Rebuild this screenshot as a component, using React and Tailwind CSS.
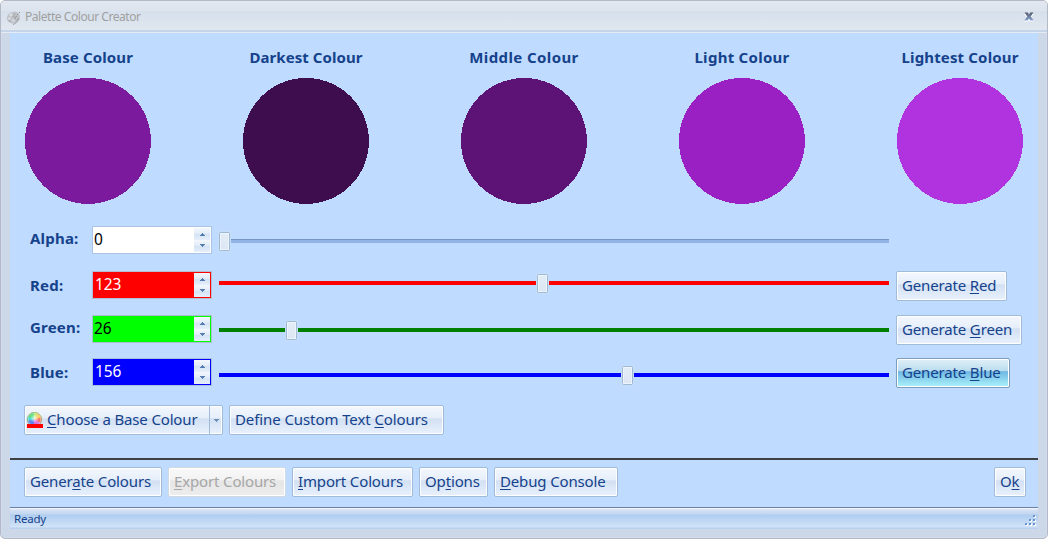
import React from "react";

const swatches = [
  { name: "Base Colour", fill: "fill-[#7b1a9c]", label: "tracking-[0.12px]" },
  { name: "Darkest Colour", fill: "fill-[#3d0d4e]", label: "tracking-[0.06px]" },
  { name: "Middle Colour", fill: "fill-[#5c1375]", label: "tracking-[0.4px]" },
  { name: "Light Colour", fill: "fill-[#9a20c3]", label: "tracking-[0.27px]" },
  { name: "Lightest Colour", fill: "fill-[#b033df]", label: "tracking-[0.15px]" },
];

const channels = [
  {
    name: "Alpha", value: 0, row: "h-[45px]", label: "mt-[1px]", field: "bg-white text-black border-[#a9c4e6]",
    track: "mt-[13px] border-t border-[#7596c5] bg-[#92b3e6]", thumb: "left-0 -top-[8px]", pad: "pl-0",
  },
  {
    name: "Red", value: 123, row: "h-[44px]", label: "mt-[3px]", field: "bg-[#ff0000] text-white border-[#b3bcd0]",
    track: "mt-[10px] bg-[#ff0000]", thumb: "left-[318px] -top-[7px]", pad: "pl-[1px]",
    button: ["Generate ", "R", "ed"], buttonSize: "w-[111px]",
  },
  {
    name: "Green", value: 26, row: "h-[43px]", label: "mt-[1px]", field: "bg-[#00ff00] text-black border-[#a8bfd0]",
    track: "mt-[13px] bg-[#008000]", thumb: "left-[67px] -top-[7px]", pad: "pl-0",
    button: ["Generate ", "G", "reen"], buttonSize: "w-[126px]",
  },
  {
    name: "Blue", value: 156, row: "h-[47px]", label: "mt-[3px]", field: "bg-[#0000ff] text-white border-[#a9bfe0]",
    track: "mt-[15px] bg-[#0000ff]", thumb: "left-[403px] -top-[7px]", pad: "pl-[1px]",
    button: ["Generate ", "B", "lue"], buttonSize: "w-[114px]", active: true,
  },
];

const actions = [
  { parts: ["Gener", "a", "te Colours"], size: "w-[138px]" },
  { parts: ["", "E", "xport Colours"], size: "w-[118px]", disabled: true },
  { parts: ["", "I", "mport Colours"], size: "w-[121px]" },
  { parts: ["Op", "t", "ions"], size: "w-[69px]" },
  { parts: ["", "D", "ebug Console"], size: "w-[124px]" },
];

const FACE = "border-[#a0bcd8] text-[#15428b] bg-[linear-gradient(to_bottom,#f4f8fe_0%,#e5eefa_44%,#d2e0f3_45%,#e9f1fd_100%)] shadow-[inset_0_0_0_1px_#fff]";
const FACE_ACTIVE = "border-[#7b9ebd] text-[#15428b] bg-[linear-gradient(to_bottom,#e2f0f8_0%,#b9dcef_43%,#70b7e3_45%,#abf3fb_100%)] shadow-[inset_0_0_0_1px_#fff]";
const FACE_DISABLED = "border-[#d1d9e1] text-[#a6a6a6] bg-[linear-gradient(to_bottom,#f9f9f9_0%,#f2f2f2_44%,#e6e6e6_45%,#ededed_100%)] shadow-[inset_0_0_0_1px_#fff]";

function Caption({ parts }) {
  return (
    <span className="whitespace-pre">
      {parts[0]}
      <span className="underline decoration-1 underline-offset-[2px] [text-decoration-skip-ink:none]">{parts[1]}</span>
      {parts[2]}
    </span>
  );
}

function Button({ parts, size, active, disabled, spacing = "tracking-[-0.15px]" }) {
  const face = disabled ? FACE_DISABLED : active ? FACE_ACTIVE : FACE;
  return (
    <button disabled={disabled} className={`flex h-[30px] shrink-0 items-center rounded-[2px] border pb-px pl-[5px] text-[15px] ${spacing} ${size} ${face}`}>
      <Caption parts={parts} />
    </button>
  );
}

function SpinHalf({ up }) {
  return (
    <span className={`flex h-[12px] justify-center bg-[linear-gradient(to_bottom,#f3f8fe,#e0eaf7_50%,#d3e2f4_51%,#e6effb)] ${up ? "pt-[5px]" : "pt-[4px]"}`}>
      <svg width="5" height="3" viewBox="0 0 5 3" className="fill-[#567db1]" shapeRendering="crispEdges">
        {up ? <path d="M2 0h1v1h1v1h1v1H0V2h1V1h1z" /> : <path d="M0 0h5v1H4v1H3v1H2V2H1V1H0z" />}
      </svg>
    </span>
  );
}

function ChannelRow({ c }) {
  return (
    <div className={`flex items-start ${c.row}`}>
      <span className={`w-[62px] shrink-0 text-[15px] leading-[22px] font-bold tracking-[0.2px] text-[#15428b] ${c.label}`}>{c.name}:</span>
      <div className={`flex h-[28px] w-[120px] shrink-0 items-start justify-between border p-px ${c.field}`}>
        <span className={`text-[15.5px] leading-[23px] tracking-[-0.1px] ${c.pad}`}>{c.value}</span>
        <span className="flex w-[16px] flex-col">
          <SpinHalf up />
          <SpinHalf />
        </span>
      </div>
      <div className={`relative ml-[7px] h-[4px] w-[670px] shrink-0 ${c.track}`}>
        <span className={`absolute h-[19px] w-[11px] rounded-[1.5px] border border-[#9fb9d3] bg-[linear-gradient(to_bottom,#e3edf8,#dce7f3)] shadow-[inset_0_0_0_1px_#edf4fc,0_0_0_1px_#c7def8] ${c.thumb}`} />
      </div>
      {c.button && (
        <div className="ml-[7px] flex">
          <Button parts={c.button} size={c.buttonSize} active={c.active} />
        </div>
      )}
    </div>
  );
}

function PaletteIcon() {
  return (
    <svg width="16" height="16" viewBox="0 0 16 16">
      <path d="M7 2C11 1 14.500 4 13.800 8c-.4 3-2.300 3.800-3.600 5.300C6.500 14.300 2 13 1 9.500 0 6 3 2.500 7 2z" fill="#bfc3c8" />
      <g fill="#dcdfe4"><circle cx="5" cy="5" r="1.4" /><circle cx="3.500" cy="8.500" r="1.3" /><circle cx="7.500" cy="10.500" r="1.4" /></g>
      <g fill="none" stroke="#8f9397" strokeWidth="1" strokeDasharray="1.500 1"><path d="M9 3.500l-2 3 3 1-2 3M12 4l-2 3M3 11.500l2-1.500M7 14.500c3-1 4-3 6-5.500M13 3l1-1M11 10.500l2-3" /></g>
    </svg>
  );
}

function ColourWheelIcon() {
  return (
    <svg width="16" height="16" viewBox="0 0 16 16" className="shrink-0">
      <defs><clipPath id="wheel"><circle cx="7.5" cy="7.5" r="7.2" /></clipPath>
        <radialGradient id="shine"><stop offset="0" stopColor="#fff" stopOpacity=".8" /><stop offset="1" stopColor="#fff" stopOpacity="0" /></radialGradient></defs>
      <g clipPath="url(#wheel)">
        <path d="M7.5 7.3L7 0H0v5z" fill="#45d96a" /><path d="M7.5 7.3L7 0h6z" fill="#b8e34a" /><path d="M7.5 7.3L12 0h4v6z" fill="#ffc24b" />
        <path d="M7.5 7.3L16 5v8z" fill="#ff725d" /><path d="M7.5 7.3L0 4v6z" fill="#39d8cd" /><path d="M7.5 7.3L0 9v6h7z" fill="#5c82ef" /><path d="M7.5 7.3L6 16h10v-4z" fill="#dd72df" />
        <circle cx="7.5" cy="6" r="5" fill="url(#shine)" />
      </g>
      <circle cx="7.5" cy="7.5" r="6.3" fill="none" stroke="#fff" strokeOpacity=".55" strokeWidth=".8" />
      <circle cx="7.5" cy="7.5" r="7.1" fill="none" stroke="#9caf78" strokeWidth=".8" />
      <rect y="12" width="16" height="4" fill="#ff0000" />
    </svg>
  );
}

function Grip() {
  const dots = [[8, 0], [4, 4], [8, 4], [0, 8], [4, 8], [8, 8]];
  return (
    <svg width="12" height="12" viewBox="0 0 12 12" shapeRendering="crispEdges">
      {dots.map(([x, y]) => (
        <g key={`${x}-${y}`}><rect x={x + 1} y={y + 1} width="2" height="2" fill="#fff" /><rect x={x} y={y} width="2" height="2" fill="#6d93cf" /></g>
      ))}
    </svg>
  );
}

export default function App() {
  return (
    <div className="h-[539px] w-[1048px] overflow-hidden bg-white font-['Noto_Sans','Open_Sans',sans-serif]">
      <div className="flex h-full flex-col rounded-[5px] border border-[#b3b9c6] bg-[#ccd7e7] shadow-[inset_0_0_0_1px_#d3dcec]">
        <header className="flex h-[32px] shrink-0 items-center justify-between rounded-t-[4px] border-b border-[#e5ebf3] bg-[linear-gradient(to_bottom,#e2e7f0_0%,#dde4ee_32%,#d6e0ec_34%,#e0e7ef_93%,#c5d5e9_95%)] pr-[13px] pl-[5px]">
          <div className="flex items-center gap-[3px]">
            <span className="pt-[2px]"><PaletteIcon /></span>
            <h1 className="text-[12px] font-normal tracking-[-0.45px] text-[#a0a0a0]">Palette Colour Creator</h1>
          </div>
          <svg width="10" height="10" viewBox="0 0 10 10" aria-label="Close">
            <defs><linearGradient id="close" x1="0" y1="0" x2="0" y2="1"><stop offset="0" stopColor="#555c6c" /><stop offset="1" stopColor="#85a2d0" /></linearGradient></defs>
            <path d="M0 2h4l1 1.5L6 2h4L7 5.5 10 9.5H6L5 8 4 9.5H0l3-4z" fill="#fff" />
            <path d="M.5 .5h3.200L5 2.500 6.300 .5h3.200L6.700 4.400 9.700 8.500H6.400L5 6.400 3.600 8.500H.3l3-4.100z" fill="url(#close)" />
          </svg>
        </header>

        <main className="mx-[9px] flex h-[474px] shrink-0 flex-col bg-[#bfdbff]">
          <section className="flex h-[193px] shrink-0 gap-[92px] pt-[13px] pl-[15px]">
            {swatches.map((s) => (
              <div key={s.name} className="flex w-[126px] shrink-0 flex-col items-center">
                <h2 className={`h-[32px] text-[15px] leading-[22px] font-bold whitespace-nowrap text-[#15428b] ${s.label}`}>{s.name}</h2>
                <svg width="126" height="126" viewBox="0 0 126 126" shapeRendering="crispEdges">
                  <circle cx="63" cy="63" r="63" className={s.fill} />
                </svg>
              </div>
            ))}
          </section>

          <section className="flex shrink-0 flex-col pl-[20px]">
            {channels.map((c) => <ChannelRow key={c.name} c={c} />)}
          </section>

          <section className="flex h-[53px] shrink-0 gap-[6px] pl-[14px]">
            <div className={`flex h-[30px] w-[199px] items-stretch rounded-[2px] border text-[15px] tracking-[-0.15px] ${FACE}`}>
              <button className="flex flex-1 items-center gap-[4px] pb-px pl-[2px]">
                <span className="pt-px"><ColourWheelIcon /></span>
                <Caption parts={["", "C", "hoose a Base Colour"]} />
              </button>
              <button className="flex w-[13px] items-center justify-center border-l border-[#a0bcd8]">
                <svg width="5" height="3" viewBox="0 0 5 3" className="fill-[#6b91b8]" shapeRendering="crispEdges"><path d="M0 0h5v1H4v1H3v1H2V2H1V1H0z" /></svg>
              </button>
            </div>
            <Button parts={["Define Custom Text ", "C", "olours"]} size="w-[215px]" spacing="tracking-[-0.09px]" />
          </section>

          <footer className="flex h-[49px] shrink-0 items-start justify-between border-t-2 border-[#3f3f46] pt-[7px] pr-[12px] pl-[14px]">
            <div className="flex gap-[6px]">
              {actions.map((a) => <Button key={a.parts.join("")} {...a} />)}
            </div>
            <Button parts={["O", "k", ""]} size="w-[32px]" />
          </footer>
        </main>

        <div className="mx-[9px] flex h-[22px] shrink-0 items-center justify-between border-t border-[#6f7ea3] bg-[linear-gradient(to_bottom,#fff_0px,#e3ecf8_1px,#d4e1f5_2px,#c3d6f0_6px,#aecdf0_7px,#cfe1f7_18px,#d5e5f8_19px,#b2cdf1_20px,#bfd4f0_21px)] pr-px pl-[4px]">
          <span className="text-[11.5px] leading-[16px] tracking-[-0.2px] text-[#15428b]">Ready</span>
          <span className="flex pt-[5px]"><Grip /></span>
        </div>
      </div>
    </div>
  );
}
